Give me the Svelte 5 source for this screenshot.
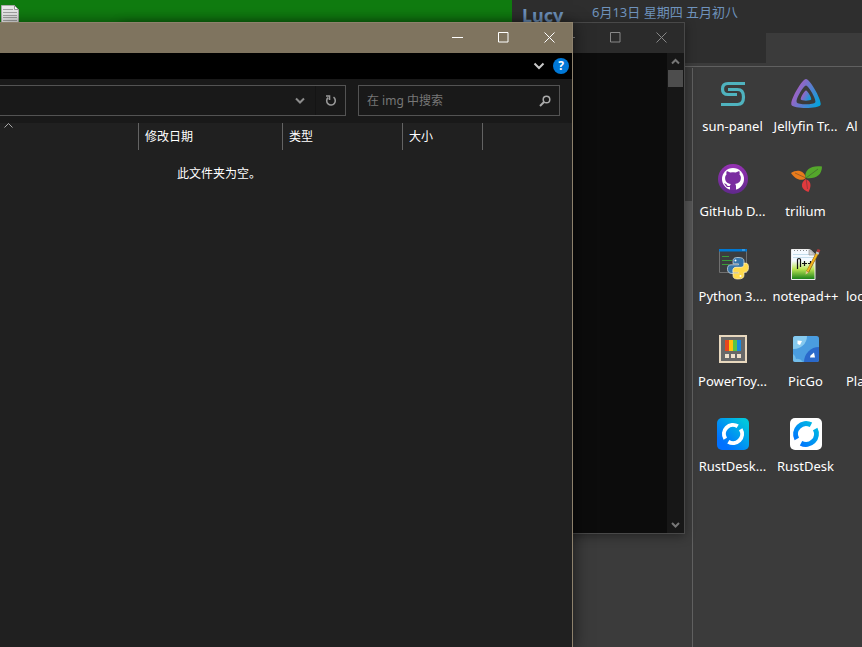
<script>
  const columns = [
    { label: '', cls: 'c-name' },
    { label: '修改日期', cls: 'c-date' },
    { label: '类型', cls: 'c-type' },
    { label: '大小', cls: 'c-size' },
  ];
  const apps = [
    ['sun', 'sun-panel'], ['jellyfin', 'Jellyfin Tr...'], ['', 'Al'],
    ['github', 'GitHub D...'], ['trilium', 'trilium'], ['', ''],
    ['python', 'Python 3....'], ['notepad', 'notepad++'], ['', 'loc'],
    ['toys', 'PowerToy...'], ['picgo', 'PicGo'], ['', 'Pla'],
    ['rustblue', 'RustDesk...'], ['rustwhite', 'RustDesk'], ['', ''],
  ];
</script>

{#snippet captions()}
  <div class="captions">
    <button aria-label="最小化"><svg width="11" height="11" viewBox="0 0 11 11"><path d="M0 5.5H11" /></svg></button>
    <button aria-label="最大化"><svg width="11" height="11" viewBox="0 0 11 11"><path d="M.5.5h9.500v9.500h-9.500z" /></svg></button>
    <button aria-label="关闭"><svg width="11" height="11" viewBox="0 0 11 11"><path d="M.5.5l10 10M10.500.5l-10 10" /></svg></button>
  </div>
{/snippet}

{#snippet appIcon(name)}
  <svg width="32" height="32" viewBox="0 0 32 32" aria-hidden="true">
    {#if name === 'sun'}
      <g fill="none" stroke="#4fb3bf" stroke-width="3.200">
        <path d="M28 5.500H11Q5.500 5.500 5.500 11T11 16.500H20" />
        <path d="M11 11.500H20.500Q26.500 11.500 26.500 19T20.500 26.500H4" />
        <path d="M11 21.500H20" stroke="none" />
      </g>
    {:else if name === 'jellyfin'}
      <defs><linearGradient id="jf" x1="0" y1="0.3" x2="1" y2="0.8"><stop offset="0.1" stop-color="#aa5cc3" /><stop offset="1" stop-color="#00a4dc" /></linearGradient></defs>
      <path fill="url(#jf)" fill-rule="evenodd" d="M16 1c4 0 16.500 22 14.500 26S3.500 31 1.500 27 12 1 16 1zm0 6.500C13.500 7.500 5.500 21.500 6.700 24.200S24 27 25.300 24.200 18.500 7.500 16 7.500z" />
      <path fill="url(#jf)" d="M16 12.500c1.500 0 6 7.500 5.200 9s-9.600 1.500-10.400 0 3.700-9 5.200-9z" />
    {:else if name === 'github'}
      <defs><linearGradient id="gh" x2="0" y2="1"><stop stop-color="#9632b4" /><stop offset="1" stop-color="#60298b" /></linearGradient></defs>
      <circle cx="16" cy="16" r="15" fill="url(#gh)" />
      <circle cx="16" cy="16" r="11" fill="#fff" />
      <path fill="#7a2ca0" d="M13 27v-3.200c-3 .8-4-.4-4.700-1.800-.4-.7-.8-1-1.300-1.300 1.500-.5 2.300.5 3 1.500.8 1 1.800 1 3 .6.100-.8.400-1.300.9-1.700-4-.6-5.800-2.500-5.800-6 0-1.500.5-2.700 1.400-3.600-.3-1-.2-2.300.2-3.300 1.200 0 2.400.7 3.300 1.300a13 13 0 0 1 6 0c1-.6 2-1.300 3.300-1.300.5 1 .5 2.300.2 3.300.9 1 1.400 2.100 1.400 3.600 0 3.500-1.900 5.400-5.800 6 .6.600.9 1.300.9 2.500V27z" />
    {:else if name === 'trilium'}
      <path fill="#e87b1c" d="M1 10c6-4 13-3 15 5-5 4-11 1-15-5z" />
      <path fill="#54a72b" d="M15.500 15C14 6 22 2 32 3.500c0 9-7 13-16.500 11.500z" />
      <path fill="#e03a3e" d="M15.500 16c6 2 6 7 3 13-7-2-9-8-3-13z" />
      <path fill="none" stroke="#333" stroke-opacity=".4" d="M5 10l11 5L28 6M16 15l1.500 11" />
    {:else if name === 'python'}
      <path fill="#3b3d3f" stroke="#707070" d="M2.500 2.500h27v22h-27z" />
      <path fill="#0078d4" d="M2 1h28v2.500H2z" /><path fill="#65b7ef" d="M25 1.500h3v1h-3z" />
      <path stroke="#399b39" d="M5 8.500h7M5 12.500h10M5 16.500h7" />
      <path fill="#3776ab" stroke="#dbe6ed" stroke-width=".7" d="M21 9.500c-4 0-5 1.300-5 4v2.300h5.500v1H14c-3 0-3.500 2-3.500 4.500S12 25.500 15 25.500h1v-3c0-2 1.500-3 3-3h5c2 0 3-1.200 3-3v-3.500c0-2.500-2-3.500-6-3.500z" />
      <path fill="#ffdb4d" stroke="#fff1bd" stroke-width=".7" d="M21 31c-4 0-5-1.300-5-4v-1.700h5.500v-1H16v-2c0-2 1.300-3 3-3h5c2 0 3-1.200 3-3v-1.200h1.500c2.500 0 3 2 3 4.500s-1 4.700-3.500 4.700h-1V27c0 3-2 4-6 4z" />
      <circle cx="18.500" cy="12.500" r="1" fill="#fff" /><circle cx="23.500" cy="28" r="1" fill="#fff" />
    {:else if name === 'notepad'}
      <defs><linearGradient id="np" x2="0" y2="1"><stop offset=".38" stop-color="#f5faff" /><stop offset=".65" stop-color="#bde653" /><stop offset="1" stop-color="#147e16" /></linearGradient></defs>
      <path fill="url(#np)" stroke="#eee" d="M1.500 1.500H20l5 5v25H1.500z" />
      <path stroke="#c4ddeb" d="M3 6.500h17M3 9.500h21" /><path stroke="#888" stroke-dasharray="1 2" d="M4 2.500h15" />
      <path fill="#cfcfcf" stroke="#888" stroke-width=".6" d="M19 1.500l6 5.500h-6z" />
      <path fill="none" stroke="#111" stroke-width="1.200" d="M7.500 21V11.500q0-1 1.500-1t1.500 1V19M12 15.500h5M14.500 13v5M18 15.500h5M20.500 13v5" />
      <path stroke="#8a6120" stroke-width="3" d="M17.500 24L28 4" /><path stroke="#f2b51d" stroke-width="2" d="M17.500 23.500L27.500 5" />
      <path stroke="#bfc3c6" stroke-width="3" d="M27 6l1-2" /><path stroke="#b53a3a" stroke-width="3" d="M28 4l1-2.500" /><path fill="#e6c58e" d="M16 23l-.4 3.500 3-2z" />
    {:else if name === 'toys'}
      <path fill="#686868" stroke="#e8d8be" stroke-width="2" d="M3 3h26v26H3z" />
      <path fill="#e8451e" d="M8 7h4v11H8z" /><path fill="#ffc20e" d="M12 7h4v11h-4z" /><path fill="#58c544" d="M16 7h4v11h-4z" /><path fill="#1989dc" d="M20 7h4v11h-4z" />
      <path fill="#eee0cc" d="M8 21h4v4H8zM14 21h4v4h-4zM20 21h4v4h-4z" />
    {:else if name === 'picgo'}
      <rect x="3" y="3" width="26" height="26" rx="2.500" fill="#4a9de0" />
      <path fill="#86caef" d="M5.500 3H17a13 13 0 0 1-14 13V5.500A2.500 2.500 0 0 1 5.500 3z" />
      <path fill="#2a69cb" d="M29 14v12.500a2.500 2.500 0 0 1-2.500 2.500H14a15 15 0 0 1 15-15z" />
      <path fill="#72bdea" d="M3 21q3 2 3 5 4-1 7 3H5.500Q3 29 3 26.500z" />
      <path fill="#fff" d="M7.500 7.500l4.500.5-2 4-2.500-1zM24 19.500l1 5h-5l.5-2z" />
    {:else if name === 'rustblue' || name === 'rustwhite'}
      <defs><linearGradient id={name} gradientUnits="userSpaceOnUse" x1="4" y1="28" x2="28" y2="4"><stop offset=".1" stop-color="#0071ff" /><stop offset="1" stop-color="#00c5de" /></linearGradient></defs>
      {@const blue = name === 'rustblue'}
      <rect width="32" height="32" rx="5" fill={blue ? `url(#${name})` : '#fff'} />
      <g fill="none" stroke={blue ? '#fff' : `url(#${name})`} stroke-width={blue ? 4 : 5}>
        {#if blue}
          <path d="M8.300 20.700A9 9 0 0 1 20.700 8.300M23.700 11.300A9 9 0 0 1 11.300 23.700" />
        {:else}
          <path d="M6.800 21A10.500 10.500 0 0 1 21 6.800M25.200 11A10.500 10.500 0 0 1 11 25.200" />
        {/if}
      </g>
    {/if}
  </svg>
{/snippet}

<main class="desktop">
  <svg class="doc" width="20" height="20" viewBox="0 0 20 20" aria-hidden="true">
    <path fill="#e9e9e9" stroke="#aaa" d="M1.500 1.500h13l4 4V20h-17z" />
    <path fill="#fff" stroke="#999" d="M14.500 1.500v4h4z" />
    <path stroke="#a3a3a3" d="M3 5.500h10M3 8.500h14M3 11.500h14M3 13.500h14M3 16.500h14" />
  </svg>

  <section class="launcher">
    <header>
      <strong>Lucy</strong>
      <time>6月13日 星期四 五月初八</time>
      <button class="tab" aria-label="分组"></button>
    </header>
    <div class="launch-body">
      <aside><div class="thumb"></div></aside>
      <div class="apps">
        {#each apps as [icon, label], i}
          {#if label}
            <button class:edge={i % 3 === 2}>{@render appIcon(icon)}<span>{label}</span></button>
          {:else}
            <div></div>
          {/if}
        {/each}
      </div>
    </div>
  </section>

  <section class="window console">
    <div class="title">{@render captions()}</div>
    <div class="screen">
      <div class="scroll">
        <svg width="17" height="17" viewBox="0 0 17 17"><path d="M5 10.500L8.500 7l3.500 3.500" /></svg>
        <div class="grip"></div>
        <svg width="17" height="17" viewBox="0 0 17 17"><path d="M5 7l3.500 3.500L12 7" /></svg>
      </div>
    </div>
  </section>

  <section class="window explorer">
    <div class="title">{@render captions()}</div>
    <div class="ribbon">
      <button aria-label="展开功能区"><svg width="12" height="8" viewBox="0 0 12 8"><path d="M1.500 1.500L6 6l4.500-4.500" fill="none" stroke="#c8c8c8" stroke-width="2" /></svg></button>
      <button class="help" aria-label="帮助">?</button>
    </div>
    <div class="nav">
      <div class="address">
        <button aria-label="历史记录"><svg width="12" height="8" viewBox="0 0 12 8"><path d="M2 1.500L6 5.500l4-4" fill="none" stroke="#8c8c8c" stroke-width="2" /></svg></button>
        <button class="refresh" aria-label="刷新"><svg width="12" height="13" viewBox="0 0 12 13"><path d="M8.500 3.200A4.300 4.300 0 1 1 3 3.600M1 2h3.500v4" fill="none" stroke="#999" stroke-width="1.600" /></svg></button>
      </div>
      <div class="search">
        <input aria-label="搜索" placeholder="在 img 中搜索" />
        <svg width="12" height="12" viewBox="0 0 12 12" fill="none" stroke="#aaa"><circle cx="7.500" cy="4.500" r="3.300" stroke-width="1.500" /><path d="M5 7L1 11" stroke-width="2" /></svg>
      </div>
    </div>
    <table>
      <thead>
        <tr>
          {#each columns as col, i}
            <th class={col.cls}>
              {#if i === 0}<svg width="9" height="5" viewBox="0 0 9 5" aria-label="升序"><path d="M.5 4.500l4-4 4 4" fill="none" stroke="#aaa" /></svg>{:else}{col.label}{/if}
            </th>
          {/each}
          <td></td>
        </tr>
      </thead>
      <tbody><tr><td colspan="5" class="empty">此文件夹为空。</td></tr></tbody>
    </table>
  </section>
</main>

<style>
  :global(body) { margin: 0; }
  .desktop {
    position: relative; height: 100vh; overflow: hidden; background: #107c10;
    font: 12px/16px "Noto Sans", "Noto Sans CJK SC", sans-serif; color: #fff;
  }
  .desktop * { box-sizing: border-box; }
  button { border: 0; padding: 0; margin: 0; background: none; color: inherit; font: inherit; }
  svg { display: block; flex: none; }
  .doc { position: absolute; left: 0; top: 4px; }

  .launcher { position: absolute; left: 512px; right: 0; top: 0; bottom: 0; display: flex; flex-direction: column; background: #3b3b3b; }
  .launcher header { display: flex; height: 63px; background: #2e2e2e; color: #6f93bd; padding-left: 10px; }
  strong { font-size: 18px; line-height: 30px; width: 70px; }
  time { font-size: 13px; line-height: 24px; flex: none; white-space: nowrap; }
  .tab { position: absolute; left: 254px; right: 0; top: 33px; height: 30px; background: #3b3b3b; }
  .launch-body { display: flex; flex: 1; margin-top: 3px; border-top: 1px solid #606060; min-height: 0; padding-top: 1px; }
  aside { width: 181px; flex: none; border-right: 1px solid #606060; display: flex; justify-content: flex-end; padding-top: 133px; }
  .thumb { width: 8px; height: 129px; background: #555; }
  .apps { flex: 1; min-width: 0; overflow: hidden; display: grid; grid-template-columns: repeat(3, 73px); grid-auto-rows: 85px; padding: 10px 0 0 3px; align-content: start; }
  .apps button { display: flex; flex-direction: column; align-items: center; gap: 6px; font-size: 13px; line-height: 20px; white-space: nowrap; }
  .apps button.edge { align-items: flex-start; padding-left: 4px; }

  .window { position: absolute; top: 22px; display: flex; flex-direction: column; }
  .title { display: flex; justify-content: flex-end; height: 30px; flex: none; }
  .captions { display: flex; }
  .captions button { width: 46px; height: 29px; display: grid; place-items: center; }
  .captions path { fill: none; stroke: currentColor; stroke-width: 1; }

  .console { left: 120px; width: 565px; height: 512px; border: 1px solid #484848; background: #2b2b2b; box-shadow: 0 2px 10px #0006; color: #888; }
  .screen { flex: 1; display: flex; justify-content: flex-end; background: #0c0c0c; }
  .scroll { width: 17px; background: #171717; display: flex; flex-direction: column; }
  .scroll path { fill: none; stroke: #777; stroke-width: 2; }
  .grip { width: 15px; height: 17px; background: #4d4d4d; margin: 0 1px auto; }

  .explorer { left: 0; width: 573px; bottom: 0; border: solid #8d816c; border-width: 1px 1px 0 0; background: #202020; box-shadow: 0 2px 16px #0009; }
  .explorer .title { background: #7f745f; }
  .ribbon { height: 26px; background: #000; display: flex; align-items: center; justify-content: flex-end; gap: 8px; padding-right: 3px; flex: none; }
  .help { width: 16px; height: 16px; border-radius: 50%; background: #0078d7; font-weight: bold; text-align: center; }
  .nav { height: 44px; flex: none; background: #191919; display: flex; gap: 12px; padding: 6px 12px 7px 0; }
  .address { flex: 1; border: 1px solid #535353; border-left: 0; display: flex; justify-content: flex-end; }
  .address button { width: 30px; display: grid; place-items: center; }
  .address .refresh { border-left: 1px solid #141414; }
  .search { width: 202px; border: 1px solid #535353; display: flex; align-items: center; padding: 0 8px; }
  input { flex: 1; min-width: 0; background: none; border: 0; outline: 0; padding: 0; color: #fff; font: inherit; }
  input::placeholder { color: #777; opacity: 1; }

  table { width: 100%; table-layout: fixed; border-collapse: separate; border-spacing: 0; }
  th, td { padding: 0; text-align: left; font-weight: normal; }
  th { height: 27px; border-right: 1px solid #636363; padding-left: 6px; }
  .c-name { width: 139px; vertical-align: top; padding-left: 4px; }
  .c-date { width: 144px; }
  .c-type { width: 120px; }
  .c-size { width: 80px; }
  .empty { padding: 16px 0 0 177px; }
</style>
